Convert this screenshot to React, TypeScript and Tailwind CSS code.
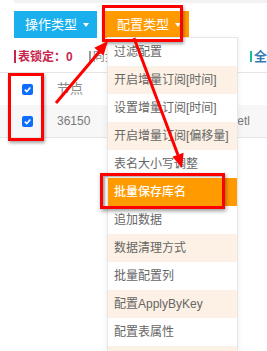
import React from 'react';

const font = { fontFamily: '"Liberation Sans", "Noto Sans CJK SC", sans-serif' };

const menuItems = [
  '过滤配置',
  '开启增量订阅[时间]',
  '设置增量订阅[时间]',
  '开启增量订阅[偏移量]',
  '表名大小写调整',
  '批量保存库名',
  '追加数据',
  '数据清理方式',
  '批量配置列',
  '配置ApplyByKey',
  '配置表属性',
  '',
];

function Caret() {
  return <span className="ml-[6px] inline-block w-0 h-0 border-l-[3px] border-r-[3px] border-t-[4px] border-l-transparent border-r-transparent border-t-white" />;
}

function Checkbox() {
  return (
    <div className="w-[11px] h-[11px] rounded-[2px] bg-[#0d6efd] flex items-center justify-center">
      <svg width="9" height="9" viewBox="0 0 10 10">
        <path d="M2 5.2 L4.2 7.3 L8.2 2.8" fill="none" stroke="white" strokeWidth="1.8" />
      </svg>
    </div>
  );
}

function DropdownMenu() {
  return (
    <div className="absolute left-[107px] top-[37px] w-[131px] bg-white border border-[#e6e6e6] shadow-[0_2px_6px_rgba(0,0,0,0.08)]">
      {menuItems.map((item, i) => {
        const active = i === 5;
        const bg = active ? 'bg-[#ff9a00] text-white font-medium' : i % 2 === 1 ? 'bg-[#fcf1e4] text-[#666]' : 'bg-white text-[#666]';
        return (
          <div key={i} className={`h-[28px] flex items-center pl-[6px] text-[12px] whitespace-nowrap ${bg}`}>
            {item}
          </div>
        );
      })}
    </div>
  );
}

function Annotations() {
  return (
    <>
      {/* red highlight boxes */}
      <div className="absolute left-[102px] top-[5px] w-[81px] h-[37px] border-[3px] border-[#ff0000] shadow-[1px_2px_3px_rgba(0,0,0,0.35)]" />
      <div className="absolute left-[8px] top-[73px] w-[36px] h-[68px] border-[3px] border-[#ff0000] shadow-[1px_2px_3px_rgba(0,0,0,0.35)]" />
      <div className="absolute left-[100px] top-[173px] w-[125px] h-[36px] border-[3px] border-[#ff0000] shadow-[1px_2px_4px_rgba(0,0,0,0.4),inset_2px_1px_2px_rgba(0,0,0,0.35)]" />

      {/* arrows */}
      <svg className="absolute inset-0 pointer-events-none" width="267" height="351">
        <line x1="56" y1="103" x2="100" y2="51" stroke="#ff0000" strokeWidth="3" />
        <polygon points="108,41 103.5,55.5 94.3,47.7" fill="#ff0000" />
        <line x1="134" y1="38" x2="178" y2="155" stroke="#ff0000" strokeWidth="3" />
        <polygon points="182,168 183.6,152.7 172.4,156.8" fill="#ff0000" />
      </svg>
    </>
  );
}

export default function App() {
  return (
    <div className="relative w-[267px] h-[351px] overflow-hidden bg-white" style={font}>
      <div className="ml-[14px] h-[3px] bg-[#f2f2f2]" />

      {/* toolbar */}
      <div className="mt-[8px] pl-[14px] flex gap-[7px]">
        <button className="h-[27px] w-[83px] pl-[11px] flex items-center bg-[#1aafed] text-white text-[13px]">
          操作类型<Caret />
        </button>
        <button className="h-[27px] w-[85px] pl-[13px] flex items-center bg-[#ff9a00] text-white text-[13px]">
          配置类型<Caret />
        </button>
      </div>

      {/* status line */}
      <div className="mt-[3px] h-[31px] pl-[14px] flex items-center text-[12px]">
        <span className="w-[2px] h-[13px] bg-[#c7254e]" />
        <span className="ml-[2px] font-bold text-[#c7254e]">表锁定：0</span>
        <span className="ml-[16px] w-[2px] h-[12px] bg-[#999]" />
        <span className="ml-[2px] text-[#888]">同步</span>
        <span className="ml-auto w-[2px] h-[11px] bg-[#1abc9c]" />
        <span className="ml-[2px] text-[#337ab7] font-bold text-[13px]">全</span>
      </div>

      {/* table */}
      <div className="border-t border-[#e5e5e5]">
        <div className="h-[32px] pl-[22px] flex items-center">
          <Checkbox />
          <span className="ml-[24px] text-[13px] text-[#888]">节点</span>
        </div>
        <div className="h-[33px] pl-[22px] pr-[17px] flex items-center bg-[#f7f7f7] border-b border-[#e5e5e5]">
          <Checkbox />
          <span className="ml-[24px] text-[12px] text-[#777]">36150</span>
          <span className="ml-auto text-[12px] text-[#777]">etl</span>
        </div>
      </div>

      <DropdownMenu />
      <Annotations />
    </div>
  );
}
